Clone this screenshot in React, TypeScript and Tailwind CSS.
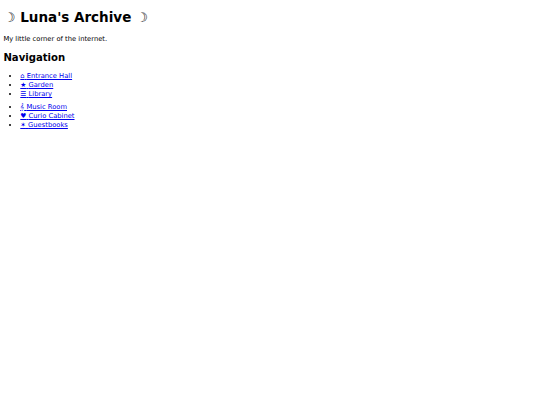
const links = [
  { icon: '⌂', label: 'Entrance Hall' },
  { icon: '★', label: 'Garden' },
  { icon: '☰', label: 'Library' },
  { icon: '𝄞', label: 'Music Room' },
  { icon: '♥', label: 'Curio Cabinet' },
  { icon: '✶', label: 'Guestbooks' },
]

// Page is a desktop-width render scaled to the 540px window, so every
// default browser size is multiplied by 540/1280.
export default function App() {
  return (
    <div className="flow-root min-h-[405px] bg-white px-[3.4px] font-['DejaVu_Sans',sans-serif] text-[6.75px] text-black">
      <h1 className="mt-[9px] mb-0 text-[13.5px] font-bold leading-[16px]">
        <span className="font-normal">☽</span> Luna's Archive <span className="font-normal">☽</span>
      </h1>
      <p className="mt-[10px] mb-0 leading-[8px]">My little corner of the internet.</p>
      <h2 className="mt-[9px] mb-0 text-[10.1px] font-bold leading-[12px]">Navigation</h2>
      <ul className="mt-[8.4px] list-disc pl-[16.9px]">
        {links.map((l) => (
          <li key={l.label} className={l.icon === '𝄞' ? 'pt-[4.6px] leading-[8.8px]' : 'leading-[8.8px]'}>
            <a href="#" className="text-[#0000ee] underline">
              {l.icon} {l.label}
            </a>
          </li>
        ))}
      </ul>
    </div>
  )
}
